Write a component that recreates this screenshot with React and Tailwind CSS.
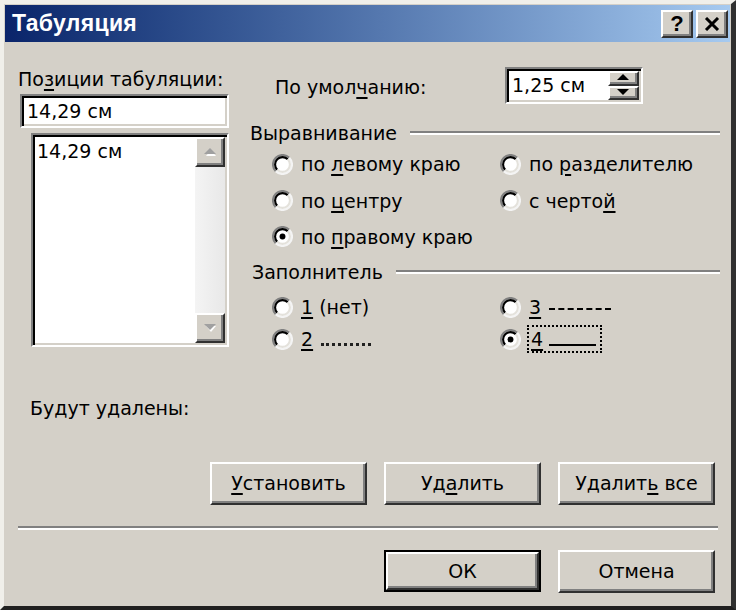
import React from "react";

const raised =
  "border-2 border-t-white border-l-white border-r-[#303030] border-b-[#303030] shadow-[inset_-2px_-2px_0_#808080]";
const sunken =
  "border-2 border-t-[#808080] border-l-[#808080] border-r-white border-b-white shadow-[inset_2px_2px_0_#000,inset_-2px_-2px_0_#d4d0c8]";

function Radio({ checked }) {
  return (
    <svg width="21" height="21" viewBox="0 0 20 20" className="shrink-0">
      <circle cx="10" cy="10" r="9" fill="#fff" />
      <path d="M16.4 3.6 A9 9 0 0 0 3.6 16.4" stroke="#808080" strokeWidth="2" fill="none" />
      <path d="M15 5 A7 7 0 0 0 5 15" stroke="#000" strokeWidth="2" fill="none" />
      <path d="M3.6 16.4 A9 9 0 0 0 16.4 3.6" stroke="#f4f4f4" strokeWidth="2" fill="none" />
      <path d="M5 15 A7 7 0 0 0 15 5" stroke="#e4e2dc" strokeWidth="2" fill="none" />
      {checked && <circle cx="10" cy="10" r="2.8" fill="#000" />}
    </svg>
  );
}

function U({ children }) {
  return <span className="underline decoration-[2px] underline-offset-[3px]">{children}</span>;
}

function RadioItem({ checked, children, className = "" }) {
  return (
    <div className={"flex items-center " + className}>
      <Radio checked={checked} />
      <span className="ml-[8px] whitespace-nowrap">{children}</span>
    </div>
  );
}

function GroupHeader({ label, className = "" }) {
  return (
    <div className={"flex items-center h-[22px] " + className}>
      <span className="whitespace-nowrap">{label}</span>
      <div className="flex-1 ml-[13px] border-t-2 border-t-[#808080] border-b-2 border-b-white" />
    </div>
  );
}

function Tri({ up, color = "#000", shadow }) {
  return (
    <svg width="13" height="8" viewBox="0 0 13 8">
      {shadow && (
        <path d={up ? "M1 7 L6 1 L11 7 Z" : "M1 1 L11 1 L6 7 Z"} transform="translate(1,1)" fill="#fff" />
      )}
      <path d={up ? "M0 6 L6 0 L12 6 Z" : "M0 0 L12 0 L6 6 Z"} fill={color} />
    </svg>
  );
}

function Btn({ children, def }) {
  const inner = (
    <div className={"w-full h-full flex items-center justify-center bg-[#d4d0c8] " + raised}>
      <span className="whitespace-nowrap">{children}</span>
    </div>
  );
  if (def) {
    return <div className="w-[157px] h-[42px] border-2 border-black">{inner}</div>;
  }
  return <div className="w-[157px] h-[43px]">{inner}</div>;
}

export default function App() {
  return (
    <div className="w-[736px] h-[610px] bg-[#d4d0c8] text-black text-[19px] font-['DejaVu_Sans',Verdana,sans-serif] border-t-[4px] border-l-[4px] border-t-[#f0efea] border-l-[#f0efea] border-r-[5px] border-b-[4px] border-r-[#303030] border-b-[#202020] p-px overflow-hidden">
      {/* Title bar */}
      <div className="h-[37px] flex items-center pl-[7px] pr-[2px] bg-gradient-to-r from-[#0a246a] to-[#a6caf0]">
        <span className="text-white font-bold text-[23px] font-['Liberation_Sans',Arial,sans-serif] tracking-[0.3px]">
          Табуляция
        </span>
        <div className="ml-auto flex gap-[3px]">
          <div
            className={
              "w-[32px] h-[28px] bg-[#d4d0c8] flex items-center justify-center font-bold text-[22px] font-['Liberation_Sans',Arial,sans-serif] " +
              raised
            }
          >
            ?
          </div>
          <div className={"w-[32px] h-[28px] bg-[#d4d0c8] flex items-center justify-center " + raised}>
            <svg width="16" height="14" viewBox="0 0 16 14">
              <path d="M2 1 L14 13 M14 1 L2 13" stroke="#000" strokeWidth="3" />
            </svg>
          </div>
        </div>
      </div>

      {/* Body */}
      <div className="flex flex-col">
        <div className="flex pl-[13px] h-[313px]">
          {/* Left column */}
          <div className="w-[211px] pt-[24px] flex flex-col shrink-0">
            <div className="h-[26px] leading-[26px] whitespace-nowrap">
              По<U>з</U>иции табуляции:
            </div>
            <div className={"mt-[2px] ml-[2px] w-[209px] h-[34px] bg-white flex items-center pl-[5px] " + sunken}>
              14,29 см
            </div>
            <div className={"mt-[5px] ml-[13px] w-[198px] h-[214px] bg-white flex " + sunken}>
              <div className="flex-1 pl-[4px] pt-[3px] leading-[26px]">14,29 см</div>
              <div className="w-[30px] flex flex-col py-[2px] mr-[2px]">
                <div className={"h-[30px] bg-[#d4d0c8] flex items-center justify-center " + raised}>
                  <Tri up color="#a0a0a0" shadow />
                </div>
                <div className="flex-1 bg-gradient-to-r from-[#f4f4f4] to-[#e8e8e8]" />
                <div className={"h-[30px] bg-[#d4d0c8] flex items-center justify-center " + raised}>
                  <Tri color="#a0a0a0" shadow />
                </div>
              </div>
            </div>
          </div>

          {/* Right column */}
          <div className="ml-[21px] w-[470px] pt-[25px] flex flex-col">
            <div className="h-[37px] flex items-center">
              <span className="ml-[25px] w-[230px] whitespace-nowrap pt-[3px]">
                По умол<U>ч</U>анию:
              </span>
              <div className={"w-[138px] h-[37px] bg-white flex " + sunken}>
                <div className="flex-1 flex items-center pl-[5px]">1,25 см</div>
                <div className="w-[33px] flex flex-col py-[2px] pr-[2px]">
                  <div className={"flex-1 bg-[#d4d0c8] flex items-center justify-center " + raised}>
                    <Tri up />
                  </div>
                  <div className={"flex-1 bg-[#d4d0c8] flex items-center justify-center " + raised}>
                    <Tri />
                  </div>
                </div>
              </div>
            </div>

            <GroupHeader label="Выравнивание" className="mt-[18px]" />
            <div className="mt-[2px] flex h-[37px] items-center">
              <RadioItem className="w-[250px] pl-[22px]">
                по <U>л</U>евому краю
              </RadioItem>
              <RadioItem>
                по <U>р</U>азделителю
              </RadioItem>
            </div>
            <div className="flex h-[37px] items-center">
              <RadioItem className="w-[250px] pl-[22px]">
                по <U>ц</U>ентру
              </RadioItem>
              <RadioItem>
                с черто<U>й</U>
              </RadioItem>
            </div>
            <div className="flex h-[36px] items-center">
              <RadioItem checked className="w-[250px] pl-[22px]">
                по <U>п</U>равому краю
              </RadioItem>
            </div>

            <GroupHeader label="Заполнитель" className="mt-[6px] pl-[2px]" />
            <div className="mt-[9px] flex h-[32px] items-center">
              <RadioItem className="w-[250px] pl-[22px]">
                <U>1</U> (нет)
              </RadioItem>
              <RadioItem>
                <U>3</U>
                <span className="inline-block align-middle ml-[8px] w-[62px] h-0 border-t-[2px] border-dashed border-black" />
              </RadioItem>
            </div>
            <div className="flex h-[32px] items-center">
              <RadioItem className="w-[250px] pl-[22px]">
                <U>2</U>
                <span className="inline-block align-baseline ml-[8px] w-[50px] h-0 border-t-[3px] border-dotted border-[#202020]" />
              </RadioItem>
              <div className="flex items-center">
                <Radio checked />
                <span className="ml-[6px] border-2 border-dotted border-black pl-[2px] h-[28px] w-[75px] leading-[24px] whitespace-nowrap">
                  <U>4</U>
                  <span className="inline-block align-baseline ml-[6px] w-[47px] h-0 border-t-[2px] border-black" />
                </span>
              </div>
            </div>
          </div>
        </div>

        <div className="mt-[41px] h-[24px] leading-[24px] pl-[25px]">Будут удалены:</div>

        <div className="mt-[42px] flex pl-[205px] gap-[17px]">
          <Btn>
            <U>У</U>становить
          </Btn>
          <Btn>
            Уд<U>а</U>лить
          </Btn>
          <Btn>
            Удалит<U>ь</U> все
          </Btn>
        </div>

        <div className="mt-[21px] ml-[13px] w-[700px] border-t-2 border-t-[#808080] border-b-2 border-b-white" />

        <div className="mt-[20px] flex pl-[379px] gap-[17px]">
          <Btn def>ОК</Btn>
          <Btn>Отмена</Btn>
        </div>
      </div>
    </div>
  );
}
